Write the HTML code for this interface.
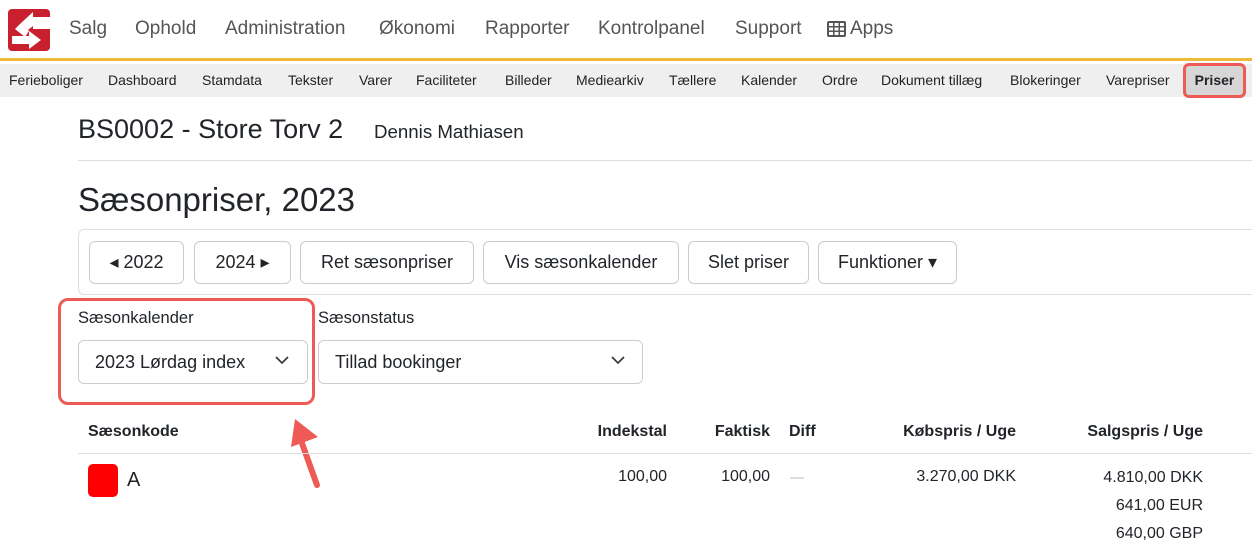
<!DOCTYPE html>
<html><head><meta charset="utf-8"><style>
*{box-sizing:border-box;margin:0;padding:0}
body{width:1252px;height:552px;overflow:hidden;background:#fff;font-family:"Liberation Sans",sans-serif;color:#212529;position:relative}
.a{position:absolute;white-space:nowrap}
.top{position:absolute;left:0;top:0;width:1252px;height:61px;background:#fff;border-bottom:3px solid #f0b93a}
.nav{font-size:19px;color:#555;top:18px}
.sub{position:absolute;left:0;top:64px;width:1252px;height:33px;background:#efefef}
.s{font-size:14px;color:#222;top:72px}
.btn{position:absolute;top:241px;height:43px;border:1px solid #ccc;border-radius:6px;font-size:18px;line-height:41px;text-align:center;background:#fff}
.sel{position:absolute;top:340px;height:44px;border:1px solid #ccc;border-radius:6px;font-size:18px;line-height:42px;padding-left:16px;background:#fff}
.th{font-size:16px;font-weight:bold;top:423px}
.td{font-size:16px}
</style></head><body>
<div class="top"></div>
<svg class="a" style="left:8px;top:9px" width="42" height="42" viewBox="0 0 42 42"><rect width="42" height="42" rx="4" fill="#c8202f"/><path d="M42 8H25V3L13 14l7 7 5-4v3h17z" fill="#fff"/><path d="M13 14l-6 6 10 8 4-6z" fill="#fff"/><path d="M4 27h17v-5l12 9-12 9v-5H4z" fill="#fff"/></svg>
<div class="a nav" style="left:69px">Salg</div>
<div class="a nav" style="left:135px">Ophold</div>
<div class="a nav" style="left:225px">Administration</div>
<div class="a nav" style="left:379px">Økonomi</div>
<div class="a nav" style="left:485px">Rapporter</div>
<div class="a nav" style="left:598px">Kontrolpanel</div>
<div class="a nav" style="left:735px">Support</div>
<svg class="a" style="left:827px;top:21px" width="19" height="16" viewBox="0 0 19 16"><rect width="19" height="16" rx="2" fill="#555"/><g fill="#fff"><rect x="2" y="2" width="4" height="3"/><rect x="7.5" y="2" width="4" height="3"/><rect x="13" y="2" width="4" height="3"/><rect x="2" y="6.5" width="4" height="3"/><rect x="7.5" y="6.5" width="4" height="3"/><rect x="13" y="6.5" width="4" height="3"/><rect x="2" y="11" width="4" height="3"/><rect x="7.5" y="11" width="4" height="3"/><rect x="13" y="11" width="4" height="3"/></g></svg>
<div class="a nav" style="left:850px">Apps</div>
<div class="sub"></div>
<div class="a s" style="left:9px">Ferieboliger</div>
<div class="a s" style="left:108px">Dashboard</div>
<div class="a s" style="left:202px">Stamdata</div>
<div class="a s" style="left:288px">Tekster</div>
<div class="a s" style="left:359px">Varer</div>
<div class="a s" style="left:416px">Faciliteter</div>
<div class="a s" style="left:505px">Billeder</div>
<div class="a s" style="left:576px">Mediearkiv</div>
<div class="a s" style="left:669px">Tællere</div>
<div class="a s" style="left:741px">Kalender</div>
<div class="a s" style="left:822px">Ordre</div>
<div class="a s" style="left:881px">Dokument tillæg</div>
<div class="a s" style="left:1010px">Blokeringer</div>
<div class="a s" style="left:1106px">Varepriser</div>
<div class="a" style="left:1183px;top:63px;width:63px;height:35px;border:3px solid #ee5a55;border-radius:6px;background:#d6d6d6;font-size:14px;font-weight:bold;text-align:center;line-height:29px">Priser</div>
<div class="a" style="left:78px;top:114px;font-size:27px">BS0002 - Store Torv 2</div>
<div class="a" style="left:374px;top:121px;font-size:18.7px">Dennis Mathiasen</div>
<div class="a" style="left:78px;top:160px;width:1174px;border-top:1px solid #ddd"></div>
<div class="a" style="left:78px;top:181px;font-size:33px">Sæsonpriser, 2023</div>
<div class="a" style="left:78px;top:229px;width:1180px;height:66px;border:1px solid #ddd;border-radius:6px"></div>
<div class="btn" style="left:89px;width:95px">◂ 2022</div>
<div class="btn" style="left:194px;width:97px">2024 ▸</div>
<div class="btn" style="left:300px;width:174px">Ret sæsonpriser</div>
<div class="btn" style="left:483px;width:196px">Vis sæsonkalender</div>
<div class="btn" style="left:688px;width:121px">Slet priser</div>
<div class="btn" style="left:818px;width:139px">Funktioner ▾</div>
<div class="a" style="left:58px;top:298px;width:257px;height:107px;border:3px solid #ee5a55;border-radius:10px"></div>
<div class="a" style="left:78px;top:309px;font-size:16.5px">Sæsonkalender</div>
<div class="a" style="left:318px;top:309px;font-size:16.5px">Sæsonstatus</div>
<div class="sel" style="left:78px;width:230px">2023 Lørdag index</div>
<div class="sel" style="left:318px;width:325px">Tillad bookinger</div>
<svg class="a" style="left:275px;top:356px" width="14" height="9"><path d="M1 1l6 6 6-6" stroke="#333" stroke-width="1.6" fill="none"/></svg>
<svg class="a" style="left:611px;top:356px" width="14" height="9"><path d="M1 1l6 6 6-6" stroke="#333" stroke-width="1.6" fill="none"/></svg>
<svg class="a" style="left:285px;top:415px" width="45" height="75"><path d="M32 70L14 20" stroke="#ee5a55" stroke-width="6" stroke-linecap="round"/><path d="M6 32L10 4 33 22z" fill="#ee5a55"/></svg>
<div class="a th" style="left:88px">Sæsonkode</div>
<div class="a th" style="right:585px">Indekstal</div>
<div class="a th" style="right:482px">Faktisk</div>
<div class="a th" style="left:789px">Diff</div>
<div class="a th" style="right:236px">Købspris / Uge</div>
<div class="a th" style="right:49px">Salgspris / Uge</div>
<div class="a" style="left:78px;top:453px;width:1174px;border-top:1px solid #ddd"></div>
<div class="a" style="left:88px;top:464px;width:30px;height:33px;background:#f00;border-radius:5px"></div>
<div class="a" style="left:127px;top:469px;font-size:20px">A</div>
<div class="a td" style="right:585px;top:468px">100,00</div>
<div class="a td" style="right:482px;top:468px">100,00</div>
<div class="a" style="left:790px;top:477px;width:14px;border-top:2px solid #ddd"></div>
<div class="a td" style="right:236px;top:468px">3.270,00 DKK</div>
<div class="a td" style="right:49px;top:469px">4.810,00 DKK</div>
<div class="a td" style="right:49px;top:497px">641,00 EUR</div>
<div class="a td" style="right:49px;top:525px">640,00 GBP</div>
</body></html>
